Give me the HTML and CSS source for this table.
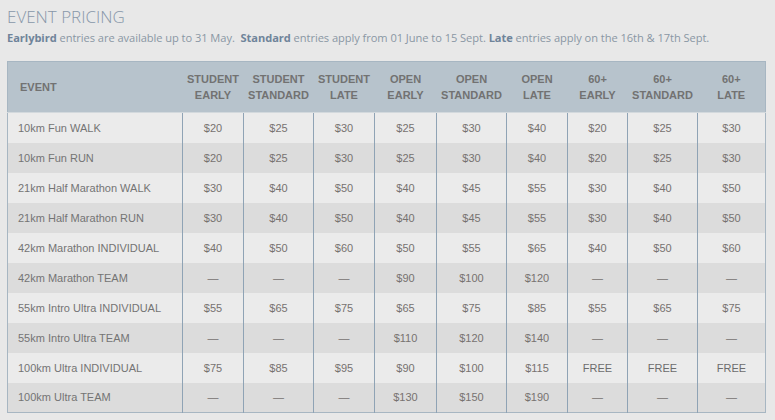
FILE: index.html
```html
<!DOCTYPE html>
<html>
<head>
<meta charset="utf-8">
<link rel="stylesheet" href="styles.css">
</head>
<body>
<div class="page">
  <h1 class="title">EVENT PRICING</h1>
  <p class="intro"><b>Earlybird</b> entries are available up to 31 May.&nbsp; <b>Standard</b> entries apply from 01 June to 15 Sept. <b>Late</b> entries apply on the 16th &amp; 17th Sept.</p>
  <table class="pricing">
    <colgroup>
      <col class="c-event"><col class="c61"><col class="c70"><col class="c61"><col class="c62"><col class="c70"><col class="c61"><col class="c60"><col class="c70"><col class="c68">
    </colgroup>
    <thead>
      <tr>
        <th class="ev">EVENT</th>
        <th>STUDENT<br>EARLY</th><th>STUDENT<br>STANDARD</th><th>STUDENT<br>LATE</th>
        <th>OPEN<br>EARLY</th><th>OPEN<br>STANDARD</th><th>OPEN<br>LATE</th>
        <th>60+<br>EARLY</th><th>60+<br>STANDARD</th><th>60+<br>LATE</th>
      </tr>
    </thead>
    <tbody>
      <tr><td>10km Fun WALK</td><td>$20</td><td>$25</td><td>$30</td><td>$25</td><td>$30</td><td>$40</td><td>$20</td><td>$25</td><td>$30</td></tr>
      <tr><td>10km Fun RUN</td><td>$20</td><td>$25</td><td>$30</td><td>$25</td><td>$30</td><td>$40</td><td>$20</td><td>$25</td><td>$30</td></tr>
      <tr><td>21km Half Marathon WALK</td><td>$30</td><td>$40</td><td>$50</td><td>$40</td><td>$45</td><td>$55</td><td>$30</td><td>$40</td><td>$50</td></tr>
      <tr><td>21km Half Marathon RUN</td><td>$30</td><td>$40</td><td>$50</td><td>$40</td><td>$45</td><td>$55</td><td>$30</td><td>$40</td><td>$50</td></tr>
      <tr><td>42km Marathon INDIVIDUAL</td><td>$40</td><td>$50</td><td>$60</td><td>$50</td><td>$55</td><td>$65</td><td>$40</td><td>$50</td><td>$60</td></tr>
      <tr><td>42km Marathon TEAM</td><td>—</td><td>—</td><td>—</td><td>$90</td><td>$100</td><td>$120</td><td>—</td><td>—</td><td>—</td></tr>
      <tr><td>55km Intro Ultra INDIVIDUAL</td><td>$55</td><td>$65</td><td>$75</td><td>$65</td><td>$75</td><td>$85</td><td>$55</td><td>$65</td><td>$75</td></tr>
      <tr><td>55km Intro Ultra TEAM</td><td>—</td><td>—</td><td>—</td><td>$110</td><td>$120</td><td>$140</td><td>—</td><td>—</td><td>—</td></tr>
      <tr><td>100km Ultra INDIVIDUAL</td><td>$75</td><td>$85</td><td>$95</td><td>$90</td><td>$100</td><td>$115</td><td class="free">FREE</td><td class="free">FREE</td><td class="free">FREE</td></tr>
      <tr><td>100km Ultra TEAM</td><td>—</td><td>—</td><td>—</td><td>$130</td><td>$150</td><td>$190</td><td>—</td><td>—</td><td>—</td></tr>
    </tbody>
  </table>
</div>
</body>
</html>
```

FILE: styles.css
```css
html, body {
  margin: 0;
  padding: 0;
  background: #e8e8e8;
}
.page {
  padding: 6px 0 0 7px;
  width: 759px;
}
.title {
  margin: 0;
  font-family: "Open Sans", "Lato", sans-serif;
  font-weight: 300;
  font-size: 17px;
  line-height: 22px;
  color: #8797a8;
}
.intro {
  margin: 2px 0 0 0;
  font-family: "Open Sans", "Lato", sans-serif;
  font-size: 11.1px;
  line-height: 16px;
  color: #8a97a4;
  letter-spacing: -0.05px;
}
.intro b {
  color: #6f849a;
  font-weight: 700;
}
.pricing {
  margin-top: 15px;
  width: 759px;
  table-layout: fixed;
  border-collapse: collapse;
  border: 1px solid #a7b6c2;
  font-family: "Liberation Sans", Arial, sans-serif;
  font-size: 11px;
  color: #777270;
}
.c-event { width: 175px; }
.c61 { width: 61px; }
.c62 { width: 62px; }
.c60 { width: 60px; }
.c70 { width: 70px; }
.c68 { width: 68px; }
.pricing thead tr {
  background: #b7c3cc;
  height: 51px;
}
.pricing th {
  font-weight: bold;
  color: #727272;
  text-align: center;
  line-height: 16px;
  padding: 0 2px;
  border-bottom: 1px solid #d3d9dd;
}
.pricing th.ev {
  text-align: left;
  padding-left: 12px;
}
.pricing tbody tr {
  height: 30px;
}
.pricing tbody tr:nth-child(odd) {
  background: #ebebeb;
}
.pricing tbody tr:nth-child(even) {
  background: #dcdcdc;
}
.pricing td {
  text-align: center;
  padding: 0;
  border-left: 1px solid #8fa3b5;
}
.pricing td:first-child {
  text-align: left;
  padding-left: 10px;
  border-left: none;
  color: #747474;
}
.pricing td.free {
  color: #6c6c6c;
}
```
